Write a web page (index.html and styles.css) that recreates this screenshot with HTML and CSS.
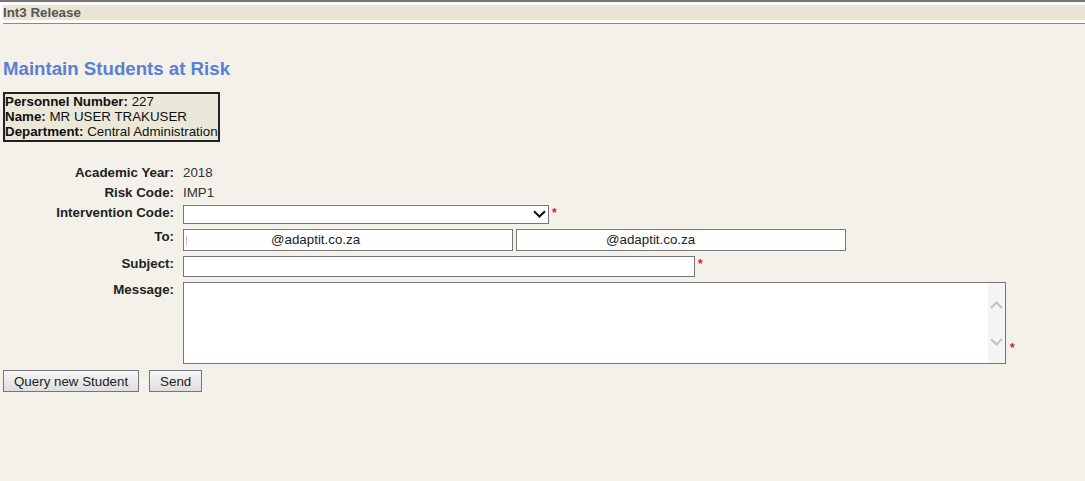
FILE: index.html
```html
<!DOCTYPE html>
<html>
<head>
<meta charset="utf-8">
<title>Maintain Students at Risk</title>
<link rel="stylesheet" href="styles.css">
</head>
<body>
<div class="header">
  <div class="band">Int3 Release</div>
  <div class="rule"></div>
</div>

<h1 class="title">Maintain Students at Risk</h1>

<div class="userbox">
  <div><b>Personnel Number:</b> 227</div>
  <div><b>Name:</b> MR USER TRAKUSER</div>
  <div><b>Department:</b> Central Administration</div>
</div>

<form class="form">
  <div class="row row-text">
    <label class="lbl">Academic Year:</label>
    <div class="val">2018</div>
  </div>
  <div class="row row-text">
    <label class="lbl">Risk Code:</label>
    <div class="val">IMP1</div>
  </div>
  <div class="row row-select">
    <label class="lbl">Intervention Code:</label>
    <div class="selectwrap">
      <select class="select"><option></option></select>
      <svg class="chev" width="13" height="8" viewBox="0 0 13 8"><path d="M1 1.2 L6.5 6.5 L12 1.2" fill="none" stroke="#111" stroke-width="2"/></svg>
    </div>
    <span class="req">*</span>
  </div>
  <div class="row row-to">
    <label class="lbl">To:</label>
    <div class="tofield to1"><span class="mark"></span>@adaptit.co.za</div>
    <div class="tofield to2">@adaptit.co.za</div>
  </div>
  <div class="row row-subject">
    <label class="lbl">Subject:</label>
    <input class="input subject" type="text">
    <span class="req">*</span>
  </div>
  <div class="row row-message">
    <label class="lbl">Message:</label>
    <div class="tawrap">
      <textarea class="textarea"></textarea>
      <div class="scroll">
        <svg width="13" height="8" viewBox="0 0 13 8"><path d="M1 7 L6.5 1.5 L12 7" fill="none" stroke="#c2c2c2" stroke-width="2"/></svg>
        <svg width="13" height="8" viewBox="0 0 13 8"><path d="M1 1 L6.5 6.5 L12 1" fill="none" stroke="#c2c2c2" stroke-width="2"/></svg>
      </div>
    </div>
    <span class="req req-bottom">*</span>
  </div>
  <div class="buttons">
    <button type="button" class="btn">Query new Student</button>
    <button type="button" class="btn">Send</button>
  </div>
</form>
</body>
</html>
```

FILE: styles.css
```css
html, body {
  margin: 0;
  padding: 0;
}
body {
  background: #f3f1ea;
  font-family: "Liberation Sans", Arial, sans-serif;
  font-size: 13.33px;
  color: #222;
}

.header {
  border-top: 2px solid #767676;
  background: #fbfbf8;
  padding: 3px 0 0 3px;
}
.band {
  height: 15px;
  line-height: 15px;
  background: #e9e5d5;
  color: #555;
  font-weight: bold;
  font-size: 13.33px;
}
.rule {
  margin-top: 3px;
  border-top: 1px solid #8a8a8a;
}

.title {
  margin: 34px 0 0 3px;
  font-size: 18.67px;
  line-height: 22px;
  font-weight: bold;
  color: #5a80d6;
}

.userbox {
  display: inline-block;
  margin: 12px 0 0 3px;
  border: 2px solid #222;
  background: #ebe8da;
  line-height: 15px;
  padding: 0 0 1px 0;
  color: #111;
}

.form {
  margin-top: 23px;
}
.row {
  display: flex;
  align-items: flex-start;
}
.lbl {
  width: 174px;
  flex: none;
  text-align: right;
  font-weight: bold;
  line-height: 16px;
  margin-right: 9px;
  color: #222;
}
.val {
  line-height: 16px;
  color: #333;
}
.row-text + .row-text { margin-top: 4px; }
.row-select { margin-top: 4px; }
.row-to { margin-top: 5px; }
.row-subject { margin-top: 5px; }
.row-message { margin-top: 5px; }

.req {
  color: #d42020;
  font-size: 12px;
  font-weight: bold;
  line-height: 11px;
  margin-left: 3px;
  margin-top: 3px;
}
.req-bottom {
  align-self: flex-end;
  margin-left: 4px;
  margin-bottom: 10px;
}

.selectwrap {
  position: relative;
  width: 366px;
  height: 19px;
}
.select {
  appearance: none;
  -webkit-appearance: none;
  box-sizing: border-box;
  width: 100%;
  height: 19px;
  margin: 0;
  border: 1px solid #767676;
  border-radius: 0;
  background: #fff;
  font-family: inherit;
  font-size: 13.33px;
}
.chev {
  position: absolute;
  right: 3px;
  top: 5px;
}

.tofield {
  box-sizing: border-box;
  height: 22px;
  line-height: 20px;
  border: 1px solid #767676;
  background: #fff;
  color: #222;
  white-space: nowrap;
  position: relative;
}
.to1 {
  width: 330px;
  padding-left: 87px;
}
.to2 {
  width: 330px;
  margin-left: 3px;
  padding-left: 89px;
}
.mark {
  position: absolute;
  left: 2px;
  top: 6px;
  width: 1px;
  height: 9px;
  background: #c8c8c8;
}

.input {
  box-sizing: border-box;
  margin: 0;
  border: 1px solid #767676;
  border-radius: 0;
  background: #fff;
  font-family: inherit;
  font-size: 13.33px;
  padding: 0 2px;
}
.subject {
  width: 512px;
  height: 21px;
}

.tawrap {
  position: relative;
  width: 823px;
  height: 82px;
}
.textarea {
  display: block;
  box-sizing: border-box;
  width: 100%;
  height: 100%;
  margin: 0;
  border: 1px solid #767676;
  border-radius: 0;
  background: #fff;
  resize: none;
  overflow: hidden;
  font-family: inherit;
  font-size: 13.33px;
}
.scroll {
  position: absolute;
  right: 1px;
  top: 1px;
  bottom: 1px;
  width: 17px;
  background: #f5f5f5;
  display: flex;
  flex-direction: column;
  justify-content: space-between;
  align-items: center;
  padding: 18px 0 17px;
  box-sizing: border-box;
}
.scroll svg { display: block; }

.buttons {
  display: flex;
  gap: 10px;
  margin: 6px 0 0 3px;
}
.btn {
  box-sizing: border-box;
  height: 22px;
  padding: 0 10px;
  border: 1px solid #767676;
  border-radius: 0;
  background: linear-gradient(#f6f6f6, #dedede);
  font-family: inherit;
  font-size: 13.33px;
  color: #222;
}
```
